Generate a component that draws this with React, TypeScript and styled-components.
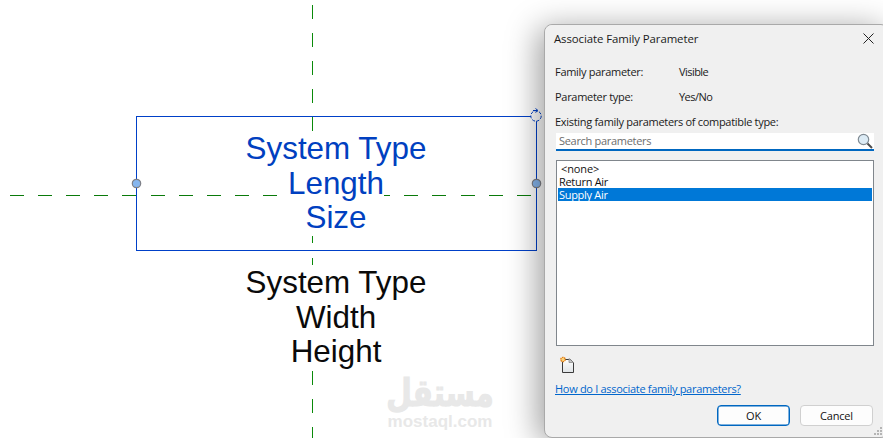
import React from "react";
import styled, { createGlobalStyle } from "styled-components";

const Global = createGlobalStyle`
  html, body { margin: 0; padding: 0; background: #fff; }
  #root { width: 883px; height: 438px; }
`;

const Page = styled.div`
  position: relative;
  width: 883px;
  height: 438px;
  overflow: hidden;
  background: #fff;
`;

const Drawing = styled.svg`
  position: absolute;
  inset: 0;
`;

const Label = styled.div<{ $top: number; $tone: string }>`
  position: absolute;
  left: 136px;
  width: 400px;
  top: ${(p) => p.$top}px;
  text-align: center;
  font-family: "Liberation Sans", Arial, sans-serif;
  font-size: 31.4px;
  line-height: 34.6px;
  color: ${(p) => p.$tone};
`;

const Watermark = styled.div`
  position: absolute;
  left: 372px;
  top: 371px;
  width: 136px;
  text-align: center;
  color: #e8e8e8;
`;

const WatermarkArabic = styled.div`
  font-family: "DejaVu Sans", sans-serif;
  font-weight: 700;
  font-size: 31px;
  line-height: 42px;
  -webkit-text-stroke: 1px #e8e8e8;
  transform: translateY(1px) scale(0.95, 1.22);
`;

const WatermarkLatin = styled.div`
  font-family: "Liberation Sans", sans-serif;
  font-weight: 700;
  font-size: 17px;
  line-height: 18px;
`;

const Dialog = styled.div`
  position: absolute;
  left: 544px;
  top: 24px;
  width: 345px;
  height: 414px;
  box-sizing: border-box;
  border: 1px solid #a9a9a9;
  border-radius: 8px;
  background: #f0f0f0;
  box-shadow: -6px 4px 32px rgba(0, 0, 0, 0.38);
  font-family: "Open Sans", sans-serif;
  font-size: 11px;
  letter-spacing: -0.3px;
  color: #1a1a1a;
  display: flex;
  flex-direction: column;
`;

const TitleBar = styled.div`
  height: 27px;
  width: 320px;
  flex: none;
  display: flex;
  align-items: center;
  justify-content: space-between;
  padding: 0 0 0 9px;
  background: #f0f0f0;
  border-radius: 8px 0 0 0;
  font-size: 11.4px;
  letter-spacing: -0.08px;
`;

const Close = styled.svg`
  width: 11px;
  height: 11px;
`;

const Body = styled.div`
  padding: 0 0 0 10px;
  width: 320px;
  display: flex;
  flex-direction: column;
`;

const InfoRow = styled.div`
  height: 25px;
  display: flex;
  align-items: center;
  &:first-child { margin-top: 7px; }
`;

const InfoKey = styled.span`
  width: 124px;
  flex: none;
`;

const InfoValue = styled.span`
  letter-spacing: -0.55px;
`;

const Caption = styled.div`
  height: 14px;
  line-height: 14px;
  margin-top: 6px;
`;

const Search = styled.div`
  margin: 4px 0 0 1px;
  width: 318px;
  height: 18px;
  box-sizing: border-box;
  background: #fff;
  border-bottom: 2px solid #0067c0;
  display: flex;
  align-items: center;
  justify-content: space-between;
  padding: 0 0 1px 3px;
  color: #6d6d6d;
`;

const List = styled.div`
  margin: 9px 0 0 1px;
  width: 318px;
  height: 186px;
  box-sizing: border-box;
  background: #fff;
  border: 1px solid #80868c;
  padding: 1px 1px;
  display: flex;
  flex-direction: column;
`;

const Item = styled.div<{ $selected?: boolean; $inset?: boolean }>`
  height: 13px;
  line-height: 13px;
  padding-left: ${(p) => (p.$inset ? 3 : 1)}px;
  letter-spacing: ${(p) => (p.$inset ? "-0.1px" : "-0.3px")};
  background: ${(p) => (p.$selected ? "#0078d7" : "transparent")};
  color: ${(p) => (p.$selected ? "#fff" : "#111")};
`;

const NewIcon = styled.svg`
  width: 18px;
  height: 18px;
  margin: 10px 0 0 4px;
  display: block;
`;

const HelpLink = styled.a`
  margin-top: 8px;
  color: #0066cc;
  text-decoration: underline;
  line-height: 14px;
  height: 14px;
`;

const Actions = styled.div`
  display: flex;
  justify-content: flex-end;
  gap: 10px;
  margin-top: 9px;
  width: 318px;
`;

const Button = styled.button<{ $primary?: boolean }>`
  width: 73px;
  height: 21px;
  box-sizing: border-box;
  border-radius: 4px;
  background: #fdfdfd;
  border: 1px solid ${(p) => (p.$primary ? "#0067c0" : "#d0d0d0")};
  box-shadow: ${(p) => (p.$primary ? "inset 0 0 0 0.5px #0067c0" : "none")};
  font-family: "Open Sans", sans-serif;
  font-size: 11px;
  letter-spacing: -0.2px;
  color: #111;
  padding: 0;
`;

const Grip = styled.svg`
  position: absolute;
  left: 328px;
  bottom: 1px;
  width: 10px;
  height: 10px;
`;

const hDashes = [10, 38, 66, 94, 122, 151, 179, 207, 235, 263, 404, 432, 461, 489, 517];
const vDashes = [5, 33, 61, 89, 117, 371, 399, 427];

const Handle = ({ cx }: { cx: number }) => (
  <circle cx={cx} cy={183.5} r={4.2} fill="#86b6ee" stroke="#7d7f86" strokeWidth={1.2} />
);

export default function App() {
  return (
    <Page>
      <Global />
      <Drawing width={883} height={438} viewBox="0 0 883 438">
        <g stroke="#0a7a0a" strokeWidth={1}>
          {hDashes.map((x) => (
            <line key={x} x1={x} x2={x + 14} y1={195.5} y2={195.5} />
          ))}
          <line x1={384} x2={390} y1={195.5} y2={195.5} />
        </g>
        <g stroke="#0a8a0a" strokeWidth={1}>
          {vDashes.map((y) => (
            <line key={y} x1={312.5} x2={312.5} y1={y} y2={y + 14} />
          ))}
          <line x1={312.5} x2={312.5} y1={236} y2={243} />
          <line x1={312.5} x2={312.5} y1={258} y2={265} />
        </g>
        <rect x={136.5} y={116.5} width={400} height={134} fill="none" stroke="#0040c8" strokeWidth={1} />
        <Handle cx={136.5} />
        <Handle cx={536.5} />
        <g fill="none" stroke="#0040c8" strokeWidth={1}>
          <circle cx={536} cy={116} r={5.2} strokeDasharray="3 1.5" fill="#fff" />
          <path d="M533 110.5h4M535.5 108.5l2.5 2-2.5 2" />
        </g>
      </Drawing>
      <Label $top={132} $tone="#0040c0">
        System Type
        <br />
        Length
        <br />
        Size
      </Label>
      <Label $top={266} $tone="#0a0a0a">
        System Type
        <br />
        Width
        <br />
        Height
      </Label>
      <Watermark>
        <WatermarkArabic>مستقل</WatermarkArabic>
        <WatermarkLatin>mostaql.com</WatermarkLatin>
      </Watermark>
      <Dialog>
        <TitleBar>
          <span>Associate Family Parameter</span>
          <Close viewBox="0 0 11 11">
            <path d="M.5.5l10 10M10.5.5l-10 10" stroke="#222" strokeWidth="1" fill="none" />
          </Close>
        </TitleBar>
        <Body>
          <InfoRow>
            <InfoKey>Family parameter:</InfoKey>
            <InfoValue>Visible</InfoValue>
          </InfoRow>
          <InfoRow>
            <InfoKey>Parameter type:</InfoKey>
            <InfoValue>Yes/No</InfoValue>
          </InfoRow>
          <Caption>Existing family parameters of compatible type:</Caption>
          <Search>
            <span>Search parameters</span>
            <svg width="17" height="16" viewBox="0 0 17 16">
              <circle cx="6.5" cy="6.5" r="5.2" fill="#dcebf5" stroke="#7f8a93" strokeWidth="1.2" />
              <path d="M10.5 10.5l4.5 4.5" stroke="#4c4c4c" strokeWidth="2" />
            </svg>
          </Search>
          <List>
            <Item $inset>&lt;none&gt;</Item>
            <Item>Return Air</Item>
            <Item $selected>Supply Air</Item>
          </List>
          <NewIcon viewBox="0 0 18 18">
            <defs>
              <linearGradient id="sheet" x1="0" y1="0" x2="0" y2="1">
                <stop offset="0" stopColor="#ffffff" />
                <stop offset="1" stopColor="#dfe3e6" />
              </linearGradient>
            </defs>
            <path d="M3.5 5.5v11h11V6.5l-3-3H6" fill="url(#sheet)" stroke="#3a3a3a" strokeWidth="1" />
            <path d="M10 2.5l4.5 4h-4.5z" fill="#c9c9c9" stroke="#8a8a8a" strokeWidth=".8" />
            <circle cx="4" cy="3.5" r="2.2" fill="#fbd27a" stroke="#e07a10" strokeWidth="1.3" strokeDasharray="1.4 .7" />
          </NewIcon>
          <HelpLink href="#">How do I associate family parameters?</HelpLink>
          <Actions>
            <Button $primary>OK</Button>
            <Button>Cancel</Button>
          </Actions>
        </Body>
        <Grip viewBox="0 0 10 10">
          <g fill="#b5b5b5">
            <rect x="7" y="1" width="2" height="2" />
            <rect x="4" y="4" width="2" height="2" />
            <rect x="7" y="4" width="2" height="2" />
            <rect x="1" y="7" width="2" height="2" />
            <rect x="4" y="7" width="2" height="2" />
            <rect x="7" y="7" width="2" height="2" />
          </g>
        </Grip>
      </Dialog>
    </Page>
  );
}
